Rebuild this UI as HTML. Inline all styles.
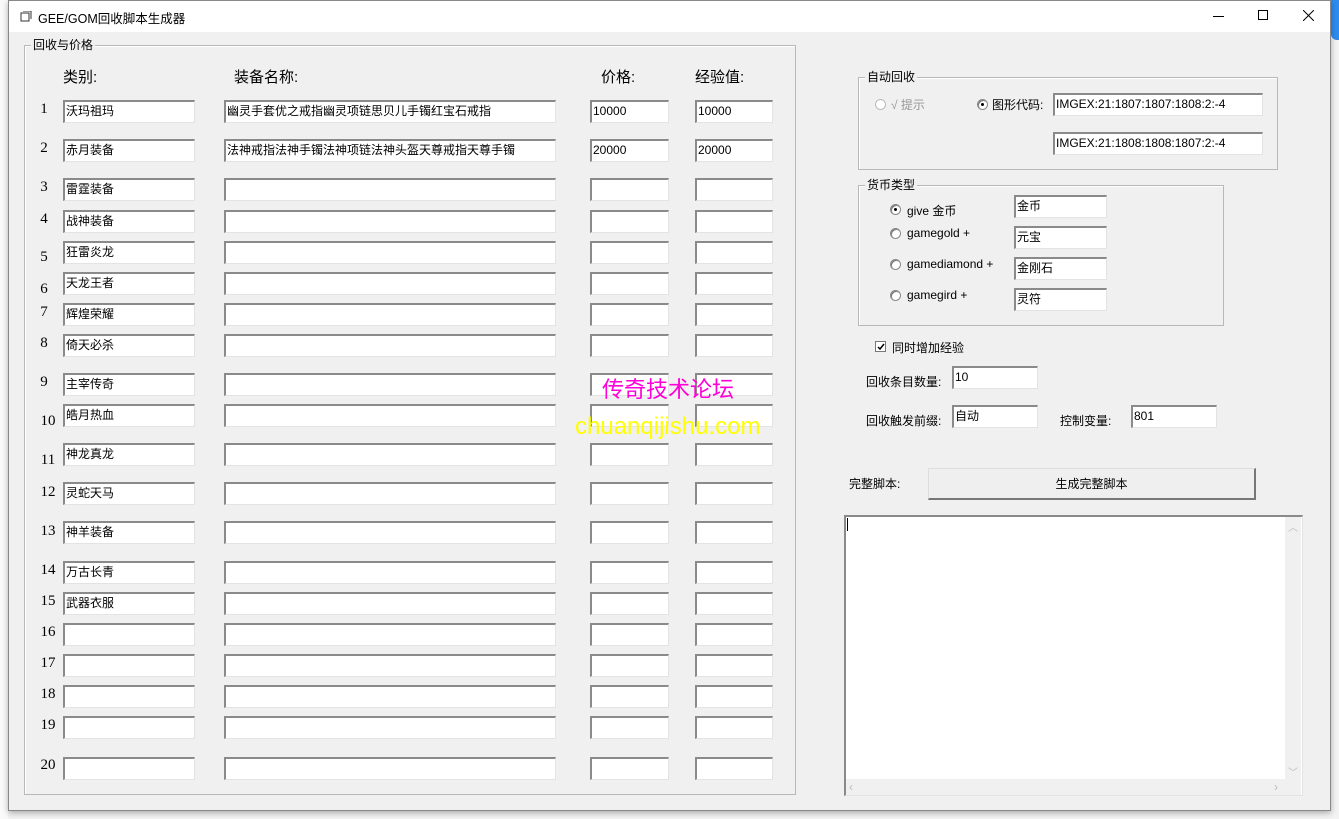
<!DOCTYPE html>
<html><head><meta charset="utf-8"><style>
*{margin:0;padding:0;box-sizing:border-box}
body{width:1339px;height:819px;position:relative;overflow:hidden;background:#f3f3f3;font-family:"Liberation Sans","Noto Sans CJK SC",sans-serif;font-size:12px;color:#000}
.a{position:absolute}
#win{left:8px;top:0;width:1323px;height:811px;background:#f0f0f0;border:1px solid #888;box-shadow:0 2px 6px rgba(0,0,0,.3)}
#tb{left:0;top:0;width:1321px;height:31px;background:#fff}
.in{position:absolute;background:#fff;border:1px solid #e3e3e3;border-top:2px solid #8a8a8a;border-left:2px solid #8a8a8a;height:23px;font-size:12px;line-height:18px;padding-left:1px;white-space:nowrap;overflow:hidden}
.grp{position:absolute;border:1px solid #b8b8b8;box-shadow:1px 1px 0 #fff inset}
.gl{position:absolute;top:-9px;left:6px;background:#f0f0f0;padding:0 2px;font-size:12px;line-height:16px}
.n{position:absolute;width:20px;text-align:center;font-family:"Liberation Serif",serif;font-size:15px}
.h{position:absolute;font-size:15px;top:66px}
.rb{position:absolute;width:11px;height:11px;border-radius:50%;border:1px solid #888;background:#fff;box-shadow:inset 1px 1px 0 #777}
.rb.on::after{content:"";position:absolute;left:3px;top:3px;width:3px;height:3px;border-radius:50%;background:#000}
.t{position:absolute;font-size:12px;white-space:nowrap}
</style></head><body>
<div class="a" style="left:0;top:0;width:8px;height:819px;background:#fafafa"></div>
<div class="a" style="left:1331px;top:0;width:8px;height:40px;background:#2d8cf0;border-radius:0 0 0 6px"></div>
<div id="win" class="a">
<div id="tb" class="a">
<svg class="a" style="left:11px;top:10px" width="12" height="11" viewBox="0 0 12 11"><path d="M1 2h8v8H1z M3 0h8v8" fill="none" stroke="#333"/></svg>
<div class="t" style="left:29px;top:7px;font-size:12.5px">GEE/GOM回收脚本生成器</div>
<div class="a" style="left:1204px;top:15px;width:11px;height:1px;background:#000"></div>
<div class="a" style="left:1249px;top:9px;width:10px;height:10px;border:1px solid #000"></div>
<svg class="a" style="left:1294px;top:9px" width="11" height="11"><path d="M0 0L11 11M11 0L0 11" stroke="#000"/></svg>
</div>
</div>

<div class="grp" style="left:24px;top:45px;width:772px;height:750px"><div class="gl">回收与价格</div></div>
<div class="h" style="left:63px">类别:</div>
<div class="h" style="left:234px">装备名称:</div>
<div class="h" style="left:601px">价格:</div>
<div class="h" style="left:695px">经验值:</div>

<div class="n" style="left:34px;top:101px">1</div><div class="in" style="left:63px;top:100px;width:132px">沃玛祖玛</div><div class="in" style="left:224px;top:100px;width:332px">幽灵手套优之戒指幽灵项链思贝儿手镯红宝石戒指</div><div class="in" style="left:590px;top:100px;width:79px">10000</div><div class="in" style="left:695px;top:100px;width:78px">10000</div>
<div class="n" style="left:34px;top:140px">2</div><div class="in" style="left:63px;top:139px;width:132px">赤月装备</div><div class="in" style="left:224px;top:139px;width:332px">法神戒指法神手镯法神项链法神头盔天尊戒指天尊手镯</div><div class="in" style="left:590px;top:139px;width:79px">20000</div><div class="in" style="left:695px;top:139px;width:78px">20000</div>
<div class="n" style="left:34px;top:179px">3</div><div class="in" style="left:63px;top:178px;width:132px">雷霆装备</div><div class="in" style="left:224px;top:178px;width:332px"></div><div class="in" style="left:590px;top:178px;width:79px"></div><div class="in" style="left:695px;top:178px;width:78px"></div>
<div class="n" style="left:34px;top:211px">4</div><div class="in" style="left:63px;top:210px;width:132px">战神装备</div><div class="in" style="left:224px;top:210px;width:332px"></div><div class="in" style="left:590px;top:210px;width:79px"></div><div class="in" style="left:695px;top:210px;width:78px"></div>
<div class="n" style="left:34px;top:249px">5</div><div class="in" style="left:63px;top:241px;width:132px">狂雷炎龙</div><div class="in" style="left:224px;top:241px;width:332px"></div><div class="in" style="left:590px;top:241px;width:79px"></div><div class="in" style="left:695px;top:241px;width:78px"></div>
<div class="n" style="left:34px;top:281px">6</div><div class="in" style="left:63px;top:272px;width:132px">天龙王者</div><div class="in" style="left:224px;top:272px;width:332px"></div><div class="in" style="left:590px;top:272px;width:79px"></div><div class="in" style="left:695px;top:272px;width:78px"></div>
<div class="n" style="left:34px;top:304px">7</div><div class="in" style="left:63px;top:303px;width:132px">辉煌荣耀</div><div class="in" style="left:224px;top:303px;width:332px"></div><div class="in" style="left:590px;top:303px;width:79px"></div><div class="in" style="left:695px;top:303px;width:78px"></div>
<div class="n" style="left:34px;top:335px">8</div><div class="in" style="left:63px;top:334px;width:132px">倚天必杀</div><div class="in" style="left:224px;top:334px;width:332px"></div><div class="in" style="left:590px;top:334px;width:79px"></div><div class="in" style="left:695px;top:334px;width:78px"></div>
<div class="n" style="left:34px;top:374px">9</div><div class="in" style="left:63px;top:373px;width:132px">主宰传奇</div><div class="in" style="left:224px;top:373px;width:332px"></div><div class="in" style="left:590px;top:373px;width:79px"></div><div class="in" style="left:695px;top:373px;width:78px"></div>
<div class="n" style="left:38px;top:413px">10</div><div class="in" style="left:63px;top:404px;width:132px">皓月热血</div><div class="in" style="left:224px;top:404px;width:332px"></div><div class="in" style="left:590px;top:404px;width:79px"></div><div class="in" style="left:695px;top:404px;width:78px"></div>
<div class="n" style="left:38px;top:452px">11</div><div class="in" style="left:63px;top:443px;width:132px">神龙真龙</div><div class="in" style="left:224px;top:443px;width:332px"></div><div class="in" style="left:590px;top:443px;width:79px"></div><div class="in" style="left:695px;top:443px;width:78px"></div>
<div class="n" style="left:38px;top:484px">12</div><div class="in" style="left:63px;top:482px;width:132px">灵蛇天马</div><div class="in" style="left:224px;top:482px;width:332px"></div><div class="in" style="left:590px;top:482px;width:79px"></div><div class="in" style="left:695px;top:482px;width:78px"></div>
<div class="n" style="left:38px;top:523px">13</div><div class="in" style="left:63px;top:521px;width:132px">神羊装备</div><div class="in" style="left:224px;top:521px;width:332px"></div><div class="in" style="left:590px;top:521px;width:79px"></div><div class="in" style="left:695px;top:521px;width:78px"></div>
<div class="n" style="left:38px;top:562px">14</div><div class="in" style="left:63px;top:561px;width:132px">万古长青</div><div class="in" style="left:224px;top:561px;width:332px"></div><div class="in" style="left:590px;top:561px;width:79px"></div><div class="in" style="left:695px;top:561px;width:78px"></div>
<div class="n" style="left:38px;top:593px">15</div><div class="in" style="left:63px;top:592px;width:132px">武器衣服</div><div class="in" style="left:224px;top:592px;width:332px"></div><div class="in" style="left:590px;top:592px;width:79px"></div><div class="in" style="left:695px;top:592px;width:78px"></div>
<div class="n" style="left:38px;top:624px">16</div><div class="in" style="left:63px;top:623px;width:132px"></div><div class="in" style="left:224px;top:623px;width:332px"></div><div class="in" style="left:590px;top:623px;width:79px"></div><div class="in" style="left:695px;top:623px;width:78px"></div>
<div class="n" style="left:38px;top:655px">17</div><div class="in" style="left:63px;top:654px;width:132px"></div><div class="in" style="left:224px;top:654px;width:332px"></div><div class="in" style="left:590px;top:654px;width:79px"></div><div class="in" style="left:695px;top:654px;width:78px"></div>
<div class="n" style="left:38px;top:686px">18</div><div class="in" style="left:63px;top:685px;width:132px"></div><div class="in" style="left:224px;top:685px;width:332px"></div><div class="in" style="left:590px;top:685px;width:79px"></div><div class="in" style="left:695px;top:685px;width:78px"></div>
<div class="n" style="left:38px;top:717px">19</div><div class="in" style="left:63px;top:716px;width:132px"></div><div class="in" style="left:224px;top:716px;width:332px"></div><div class="in" style="left:590px;top:716px;width:79px"></div><div class="in" style="left:695px;top:716px;width:78px"></div>
<div class="n" style="left:38px;top:757px">20</div><div class="in" style="left:63px;top:757px;width:132px"></div><div class="in" style="left:224px;top:757px;width:332px"></div><div class="in" style="left:590px;top:757px;width:79px"></div><div class="in" style="left:695px;top:757px;width:78px"></div>

<div class="t" style="left:602px;top:372px;font-size:22px;color:#ff00d8">传奇技术论坛</div>
<div class="t" style="left:575px;top:413px;font-size:24px;color:#ffff00">chuanqijishu.com</div>

<div class="grp" style="left:858px;top:77px;width:420px;height:93px"><div class="gl">自动回收</div></div>
<div class="rb" style="left:875px;top:99px;border-color:#bbb;box-shadow:none"></div><div class="t" style="left:891px;top:96px;color:#999">√ 提示</div>
<div class="rb on" style="left:977px;top:99px"></div><div class="t" style="left:992px;top:96px">图形代码:</div>
<div class="in" style="left:1053px;top:93px;width:210px">IMGEX:21:1807:1807:1808:2:-4</div>
<div class="in" style="left:1053px;top:132px;width:210px">IMGEX:21:1808:1808:1807:2:-4</div>

<div class="grp" style="left:858px;top:185px;width:366px;height:141px"><div class="gl">货币类型</div></div>
<div class="rb on" style="left:890px;top:204px"></div><div class="t" style="left:907px;top:202px">give 金币</div>
<div class="rb" style="left:890px;top:228px"></div><div class="t" style="left:907px;top:226px">gamegold +</div>
<div class="rb" style="left:890px;top:259px"></div><div class="t" style="left:907px;top:257px">gamediamond +</div>
<div class="rb" style="left:890px;top:290px"></div><div class="t" style="left:907px;top:288px">gamegird +</div>
<div class="in" style="left:1014px;top:195px;width:93px">金币</div>
<div class="in" style="left:1014px;top:226px;width:93px">元宝</div>
<div class="in" style="left:1014px;top:257px;width:93px">金刚石</div>
<div class="in" style="left:1014px;top:288px;width:93px">灵符</div>

<div class="a" style="left:875px;top:341px;width:11px;height:11px;background:#fff;border:1px solid #777"></div>
<svg class="a" style="left:876px;top:342px" width="10" height="10"><path d="M2 5l2 2 4-5" stroke="#000" stroke-width="1.5" fill="none"/></svg>
<div class="t" style="left:892px;top:339px">同时增加经验</div>
<div class="t" style="left:866px;top:373px">回收条目数量:</div>
<div class="in" style="left:952px;top:366px;width:86px">10</div>
<div class="t" style="left:866px;top:412px">回收触发前缀:</div>
<div class="in" style="left:952px;top:405px;width:86px">自动</div>
<div class="t" style="left:1060px;top:412px">控制变量:</div>
<div class="in" style="left:1131px;top:405px;width:86px">801</div>

<div class="t" style="left:849px;top:475px">完整脚本:</div>
<div class="a" style="left:928px;top:468px;width:328px;height:32px;background:#efefef;border:1px solid #ddd;border-right:2px solid #777;border-bottom:2px solid #777;text-align:center;line-height:30px">生成完整脚本</div>

<div class="a" style="left:844px;top:515px;width:459px;height:281px;background:#fff;border:1px solid #e3e3e3;border-top:2px solid #8a8a8a;border-left:2px solid #8a8a8a"></div>
<div class="a" style="left:847px;top:518px;width:1px;height:13px;background:#000"></div>
<div class="a" style="left:1285px;top:517px;width:16px;height:262px;background:#f0f0f0"></div>
<div class="a" style="left:846px;top:779px;width:455px;height:16px;background:#f0f0f0"></div>
<div class="t" style="left:1288px;top:519px;color:#bbb;font-size:10px">︿</div>
<div class="t" style="left:1288px;top:764px;color:#bbb;font-size:10px">﹀</div>
<div class="t" style="left:849px;top:780px;color:#bbb">‹</div>
<div class="t" style="left:1274px;top:780px;color:#bbb">›</div>
</body></html>
